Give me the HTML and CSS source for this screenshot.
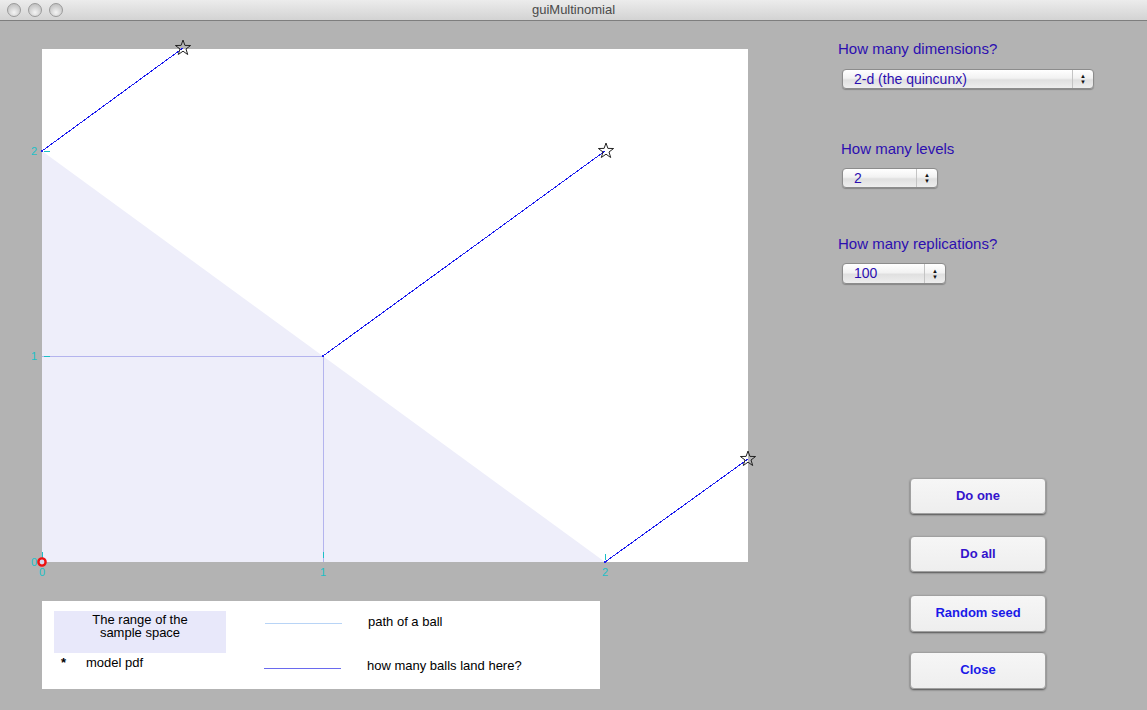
FILE: index.html
```html
<!DOCTYPE html>
<html>
<head>
<meta charset="utf-8">
<title>guiMultinomial</title>
<link rel="stylesheet" href="styles.css">
</head>
<body>
<div class="window">
  <div class="titlebar">
    <div class="lights"><span class="light"></span><span class="light"></span><span class="light"></span></div>
    <div class="title">guiMultinomial</div>
  </div>
  <div class="content">
    <div class="left">
      <svg class="plot" width="800" height="580" viewBox="0 21 800 580">
        <defs>
          <path id="star" d="M0,-8 L1.9,-2.6 7.6,-2.5 3,1 4.7,6.5 0,3.2 -4.7,6.5 -3,1 -7.6,-2.5 -1.9,-2.6 Z" fill="none" stroke="#222" stroke-width="1"/>
        </defs>
        <rect x="42" y="49" width="706" height="513" fill="#ffffff"/>
        <polygon points="42,151 42,562 605,562" fill="#eeeefa"/>
        <line x1="42" y1="356.5" x2="323" y2="356.5" stroke="#b4b4ee" stroke-width="1"/>
        <line x1="323.5" y1="356" x2="323.5" y2="562" stroke="#b4b4ee" stroke-width="1"/>
        <g stroke="#1a1aee" stroke-width="1" shape-rendering="crispEdges">
          <line x1="42" y1="151" x2="183" y2="48"/>
          <line x1="323" y1="356" x2="605" y2="151"/>
          <line x1="605" y1="562" x2="748" y2="459"/>
        </g>
        <rect x="322" y="355" width="2" height="2" fill="#1a1aee"/>
        <rect x="41" y="150" width="2" height="2" fill="#1a1aee"/>
        <rect x="604" y="561" width="2" height="2" fill="#1a1aee"/>
        <use href="#star" x="183" y="48"/>
        <use href="#star" x="606" y="151"/>
        <use href="#star" x="748" y="459"/>
        <g stroke="#1cbfc6" stroke-width="1">
          <line x1="44" y1="151.5" x2="50" y2="151.5"/>
          <line x1="44" y1="356.5" x2="50" y2="356.5"/>
          <line x1="42.5" y1="552" x2="42.5" y2="558"/>
          <line x1="323.5" y1="552" x2="323.5" y2="558"/>
          <line x1="605.5" y1="554" x2="605.5" y2="560"/>
        </g>
        <g class="tick" fill="#1cbfc6">
          <text x="34" y="155" text-anchor="middle">2</text>
          <text x="34" y="360" text-anchor="middle">1</text>
          <text x="34" y="566" text-anchor="middle">0</text>
          <text x="42" y="576" text-anchor="middle">0</text>
          <text x="323" y="576" text-anchor="middle">1</text>
          <text x="605" y="576" text-anchor="middle">2</text>
        </g>
        <circle cx="42" cy="562" r="3.6" fill="#d8d8ee" stroke="#ee1111" stroke-width="2.4"/>
      </svg>
      <div class="legend">
        <div class="swatch">The range of the<br>sample space</div>
        <div class="cell line-cell"><span class="lline light-line"></span></div>
        <div class="cell text1">path of a ball</div>
        <div class="cell pdf"><span class="ast">*</span><span>model pdf</span></div>
        <div class="cell line-cell2"><span class="lline dark-line"></span></div>
        <div class="cell text2">how many balls land here?</div>
      </div>
    </div>
    <div class="right">
      <div class="label l1">How many dimensions?</div>
      <div class="select s1"><span class="val">2-d (the quincunx)</span><span class="arrows"><span>▲</span><span>▼</span></span></div>
      <div class="label l2">How many levels</div>
      <div class="select s2"><span class="val">2</span><span class="arrows"><span>▲</span><span>▼</span></span></div>
      <div class="label l3">How many replications?</div>
      <div class="select s3"><span class="val">100</span><span class="arrows"><span>▲</span><span>▼</span></span></div>
      <div class="buttons">
        <div class="btn b1 purple">Do one</div>
        <div class="btn b2 purple">Do all</div>
        <div class="btn b3">Random seed</div>
        <div class="btn b4">Close</div>
      </div>
    </div>
  </div>
</div>
</body>
</html>
```
FILE: styles.css
```css
html, body {
  margin: 0;
  padding: 0;
  background: #b3b3b3;
}
body {
  width: 1147px;
  height: 710px;
  overflow: hidden;
  font-family: "Liberation Sans", Arial, sans-serif;
}
.window {
  display: flex;
  flex-direction: column;
  width: 1147px;
  height: 710px;
}
.titlebar {
  height: 20px;
  border-bottom: 1px solid #7e7e7e;
  background: linear-gradient(#ececec, #d3d3d3);
  display: flex;
  align-items: center;
  position: relative;
}
.lights {
  display: flex;
  gap: 7px;
  padding-left: 7px;
}
.light {
  width: 14px;
  height: 14px;
  border-radius: 50%;
  box-sizing: border-box;
  border: 1px solid #9a9a9a;
  background: radial-gradient(circle at 50% 70%, #f4f4f4 0%, #d0d0d0 55%, #b6b6b6 100%);
}
.title {
  position: absolute;
  left: 0;
  right: 0;
  top: 0;
  line-height: 20px;
  text-align: center;
  font-size: 13px;
  color: #4a4a4a;
  font-family: "Liberation Sans", Arial, sans-serif;
}
.content {
  display: flex;
  flex: 1;
}
.left {
  width: 800px;
  display: flex;
  flex-direction: column;
}
.plot {
  display: block;
  overflow: visible;
}
.tick {
  font-family: "Liberation Sans", Arial, sans-serif;
  font-size: 11px;
}
.legend {
  margin-left: 42px;
  width: 558px;
  height: 88px;
  background: #ffffff;
  box-sizing: border-box;
  padding: 10px 0 0 12px;
  display: grid;
  grid-template-columns: 172px 78px 1fr;
  grid-template-rows: 42px 30px;
  column-gap: 38px;
  font-size: 13px;
  color: #000;
}
.swatch {
  background: #e8e8fa;
  text-align: center;
  line-height: 13px;
  padding-top: 2px;
  box-sizing: border-box;
}
.line-cell {
  padding-top: 12px;
  padding-left: 1px;
}
.line-cell2 {
  padding-top: 15px;
}
.lline {
  display: block;
  width: 77px;
  height: 1px;
}
.light-line {
  background: #b8d4f6;
}
.dark-line {
  background: #6a6aee;
}
.text1 {
  margin-left: -12px;
  line-height: 20px;
  padding-top: 1px;
}
.text2 {
  margin-left: -13px;
  line-height: 20px;
  padding-top: 3px;
}
.pdf {
  display: flex;
  padding-left: 7px;
  line-height: 20px;
}
.ast {
  width: 25px;
  font-weight: bold;
}
.right {
  flex: 1;
  display: flex;
  flex-direction: column;
  align-items: flex-start;
  padding-left: 38px;
}
.label {
  font-size: 15px;
  line-height: 16px;
  color: #2c0fb0;
}
.l1 { margin-top: 20px; }
.l2 { margin-top: 52px; margin-left: 3px; }
.l3 { margin-top: 48px; }
.select {
  display: flex;
  align-items: stretch;
  height: 20px;
  box-sizing: border-box;
  margin-left: 4px;
  border: 1px solid #8c8c8c;
  border-radius: 4px;
  background: linear-gradient(#ffffff 0%, #f2f2f2 45%, #e0e0e0 55%, #eeeeee 100%);
  box-shadow: 0 1px 1px rgba(0, 0, 0, 0.25);
  font-size: 14px;
  color: #2c0fb0;
}
.s1 { width: 252px; margin-top: 12px; }
.s2 { width: 96px; margin-top: 11px; }
.s3 { width: 104px; margin-top: 11px; height: 21px; }
.val {
  flex: 1;
  padding-left: 11px;
  line-height: 18px;
}
.arrows {
  width: 20px;
  border-left: 1px solid #c4c4c4;
  display: flex;
  flex-direction: column;
  align-items: center;
  justify-content: center;
  font-size: 6px;
  line-height: 6px;
  color: #111;
}
.buttons {
  margin-top: 194px;
  margin-left: 72px;
  display: flex;
  flex-direction: column;
}
.btn {
  width: 136px;
  height: 36px;
  box-sizing: border-box;
  border: 1px solid #a0a0a0;
  border-radius: 4px;
  background: linear-gradient(#f6f6f6, #eeeeee);
  box-shadow: 0 1px 2px rgba(0, 0, 0, 0.55);
  display: flex;
  align-items: center;
  justify-content: center;
  padding-bottom: 2px;
  font-size: 13px;
  font-weight: bold;
  color: #1a1ae8;
}
.btn.purple { color: #3414cc; }
.b2 { margin-top: 22px; }
.b3 { margin-top: 23px; height: 37px; }
.b4 { margin-top: 20px; height: 37px; }
```
